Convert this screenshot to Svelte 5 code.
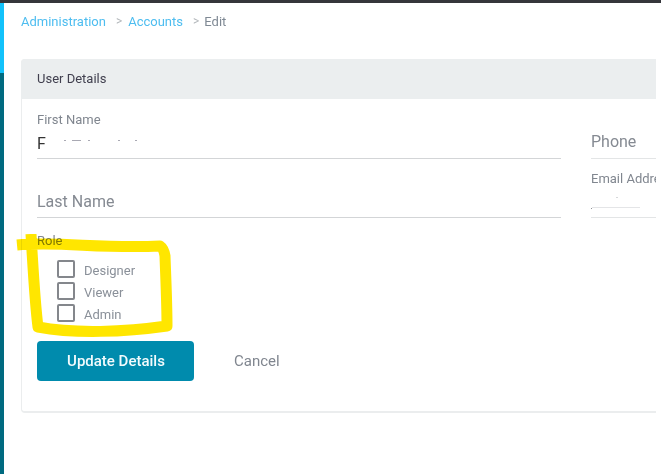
<script>
  let roles = ["Designer", "Viewer", "Admin"];
</script>

<div class="page">
  <div class="topbar"></div>
  <div class="shell">
    <div class="sidebar"><div class="sidebar-top"></div></div>
    <main class="main">
      <nav class="crumbs">
        <a href="#admin">Administration</a>
        <span class="sep">&gt;</span>
        <a href="#accounts">Accounts</a>
        <span class="sep">&gt;</span>
        <span class="current">Edit</span>
      </nav>

      <section class="card">
        <div class="card-head">User Details</div>
        <div class="card-body">
          <div class="left">
            <div class="field first">
              <label for="fname">First Name</label>
              <div class="value" id="fname">
                <span class="letter">F</span>
                <i class="m" style="left: 27px; width: 2px"></i>
                <i class="m" style="left: 35px; width: 9px"></i>
                <i class="m" style="left: 51px; width: 2px"></i>
                <i class="m" style="left: 81px; width: 2px"></i>
                <i class="m" style="left: 98px; width: 2px"></i>
              </div>
            </div>
            <div class="field last">
              <span class="placeholder">Last Name</span>
            </div>

            <div class="role-label">Role</div>
            <div class="roles">
              {#each roles as role}
                <label class="role">
                  <input type="checkbox" />
                  <span>{role}</span>
                </label>
              {/each}
            </div>

            <div class="actions">
              <button class="update">Update Details</button>
              <button class="cancel">Cancel</button>
            </div>
          </div>

          <div class="right">
            <div class="field phone">
              <span class="placeholder">Phone</span>
            </div>
            <div class="field email">
              <label for="email">Email Address</label>
              <div class="value small" id="email">
                <i class="m dim" style="left: 25px; width: 2px; top: 11px"></i>
                <i class="m faint" style="left: 1px; width: 48px; top: 21px"></i>
                <i class="m dark" style="left: 0; width: 1px; top: 22px"></i>
              </div>
            </div>
          </div>
        </div>
      </section>
    </main>
  </div>

  <svg class="marker" width="180" height="110" viewBox="0 0 180 110" aria-hidden="true">
    <path d="M17 11 C60 7 100 15 160 12 C163 14 164 16 165 22 C166 50 167 70 167 92 C125 98 75 100 38 93 C35 70 33 35 31 0" />
  </svg>
</div>

<style>
  :global(body) {
    margin: 0;
    background: #fff;
  }

  .page {
    position: relative;
    width: 661px;
    height: 474px;
    overflow: hidden;
    font-family: Roboto, "Liberation Sans", sans-serif;
    color: #80868f;
    background: #fff;
  }

  .topbar {
    height: 3px;
    background: #35363b;
  }

  .shell {
    display: flex;
    height: 471px;
  }

  .sidebar {
    width: 4px;
    background: #006a80;
  }

  .sidebar-top {
    height: 70px;
    background: #12c2fb;
  }

  .main {
    width: 652px;
    overflow: hidden;
    padding: 11px 0 0 17px;
    box-sizing: border-box;
  }

  .crumbs {
    font-size: 13px;
    line-height: 15px;
    display: flex;
  }

  .crumbs a {
    color: #4dbdf0;
    text-decoration: none;
  }

  .sep {
    color: #b4b8bc;
    margin: 0 6px 0 10px;
    font-size: 12px;
  }

  .current {
    color: #7f8994;
    margin-left: -1px;
  }

  .card {
    margin-top: 30px;
    width: 660px;
    height: 354px;
    box-sizing: border-box;
    border: 1px solid #ebedee;
    border-bottom-width: 2px;
    border-radius: 4px 0 0 4px;
  }

  .card-head {
    height: 40px;
    margin: -1px 0 0 -1px;
    padding-left: 16px;
    background: #ebeeef;
    border-radius: 4px 0 0 0;
    color: #41404f;
    font-size: 13px;
    line-height: 39px;
  }

  .card-body {
    display: flex;
    gap: 30px;
    padding: 13px 0 0 15px;
  }

  .left {
    width: 524px;
    flex: none;
  }

  .right {
    flex: 1;
  }

  .field {
    border-bottom: 1px solid #d3d5d7;
    box-sizing: border-box;
    position: relative;
  }

  .field label {
    display: block;
    font-size: 13px;
    line-height: 15px;
    color: #80868f;
  }

  .first {
    height: 47px;
  }

  .value {
    position: relative;
    height: 24px;
    font-size: 16px;
    color: #333;
  }

  .letter {
    position: absolute;
    left: 0;
    top: 8px;
    line-height: 18px;
  }

  .m {
    position: absolute;
    top: 13px;
    height: 1px;
    background: #a9a9b3;
  }

  .m.dim {
    background: #d6d8da;
  }

  .m.faint {
    background: #e4e5e7;
  }

  .m.dark {
    background: #8f9296;
  }

  .last {
    height: 46px;
    margin-top: 13px;
    padding-top: 20px;
  }

  .placeholder {
    font-size: 16px;
    line-height: 20px;
    display: block;
    color: #858a92;
  }

  .role-label {
    margin-top: 15px;
    font-size: 13px;
    line-height: 15px;
  }

  .roles {
    margin: 10px 0 0 20px;
  }

  .role {
    display: flex;
    align-items: center;
    height: 22px;
    font-size: 13px;
    color: #8a9099;
  }

  .role span {
    padding-top: 2px;
  }

  .role input {
    appearance: none;
    width: 18px;
    height: 18px;
    margin: 0 9px 0 0;
    border: 2px solid #84878c;
    border-radius: 2px;
    box-sizing: border-box;
    background: #fff;
  }

  .actions {
    display: flex;
    align-items: center;
    margin-top: 17px;
  }

  button {
    font-family: inherit;
    border: 0;
    cursor: pointer;
  }

  .update {
    width: 157px;
    height: 40px;
    padding: 0 0 0 1px;
    border-radius: 4px;
    background: #008bad;
    color: #f2fbfd;
    font-size: 15px;
    font-weight: 500;
  }

  .cancel {
    margin-left: 40px;
    padding: 0;
    background: none;
    color: #80868f;
    font-size: 15px;
  }

  .phone {
    height: 47px;
    padding-top: 20px;
    border-bottom-color: #e3e5e6;
  }

  .email {
    height: 47px;
    margin-top: 12px;
    white-space: nowrap;
    border-bottom-color: #e3e5e6;
  }

  .value.small {
    height: 30px;
  }

  .marker {
    position: absolute;
    left: 0;
    top: 234px;
    mix-blend-mode: multiply;
    pointer-events: none;
  }

  .marker path {
    fill: none;
    stroke: #ffe600;
    stroke-width: 11;
    stroke-linejoin: round;
  }
</style>
